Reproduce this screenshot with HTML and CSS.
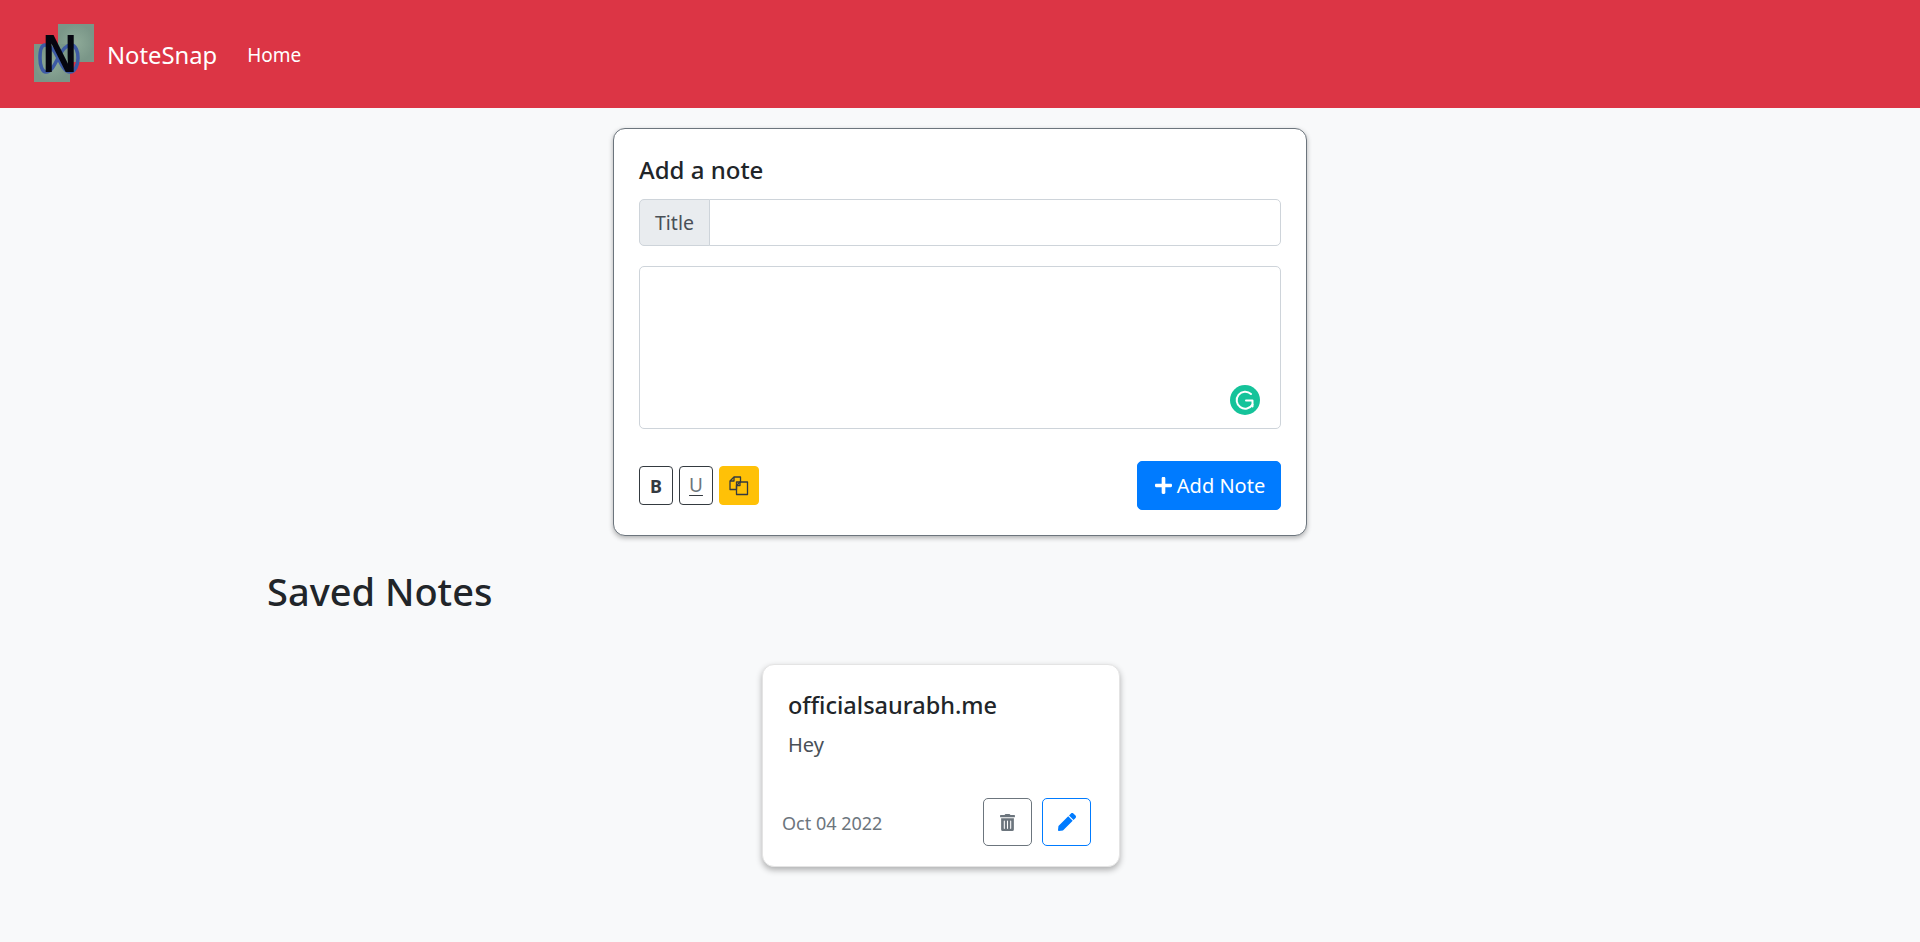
FILE: index.html
```html
<!DOCTYPE html>
<html lang="en">
<head>
<meta charset="utf-8">
<title>NoteSnap</title>
<link rel="stylesheet" href="styles.css">
</head>
<body>
<nav class="navbar">
  <a class="brand">
    <svg class="logo" width="60" height="60" viewBox="0 0 60 60">
      <defs>
        <radialGradient id="tile">
          <stop offset="0" stop-color="#8eaa98"/>
          <stop offset="1" stop-color="#7a9688"/>
        </radialGradient>
      </defs>
      <rect x="24" y="0" width="36" height="38" fill="url(#tile)"/>
      <rect x="0" y="20" width="36" height="38" fill="url(#tile)"/>
      <path d="M24 34C20 25 15 21 11 21C7 21 6 28 6 34C6 41 8 48 12 48C17 48 20 42 24 34C28 26 32 21 37 21C42 21 44 28 44 34C44 41 41 48 36 48C31 48 28 42 24 34Z" fill="none" stroke="#3d5aa5" stroke-width="3.500"/>
      <text class="logo-n" transform="translate(8.500 48) scale(.9 1)">N</text>
    </svg>
    <span>NoteSnap</span>
  </a>
  <a class="nav-link">Home</a>
</nav>

<section class="add-card">
  <h5 class="add-title">Add a note</h5>
  <div class="input-group">
    <span class="input-label">Title</span>
    <input class="input-field" type="text" aria-label="Title">
  </div>
  <div class="textarea-wrap">
    <textarea class="note-text" aria-label="Note"></textarea>
    <svg class="grammarly" width="30" height="30" viewBox="0 0 30 30">
      <circle cx="15" cy="15" r="15" fill="#15c39a"/>
      <path d="M21 9A8.500 8.500 0 1 0 22.500 19.500" fill="none" stroke="#fff" stroke-width="2" stroke-linecap="round"/>
      <path d="M16 15.500H22.500V21.500" fill="none" stroke="#fff" stroke-width="2" stroke-linecap="round" stroke-linejoin="round"/>
    </svg>
  </div>
  <div class="actions">
    <div class="tools">
      <button class="tool tool-b">B</button>
      <button class="tool tool-u">U</button>
      <button class="tool tool-copy">
        <svg width="20" height="20" viewBox="0 0 20 20" fill="none" stroke="#343a40" stroke-width="1.300" stroke-linejoin="round">
          <path d="M5 1H11.500V6H7.500V13.500H1V5Z"/>
          <path d="M5 1V5H1"/>
          <path d="M11 6H18.500V18.500H7.500V9.500Z"/>
          <path d="M11 6V9.500H7.500"/>
        </svg>
      </button>
    </div>
    <button class="add-btn">
      <svg width="17" height="17" viewBox="0 0 448 448" fill="#fff"><path d="M416 176H272V32c0-17.700-14.300-32-32-32h-32c-17.700 0-32 14.300-32 32v144H32c-17.700 0-32 14.300-32 32v32c0 17.700 14.300 32 32 32h144v144c0 17.700 14.300 32 32 32h32c17.700 0 32-14.300 32-32V272h144c17.700 0 32-14.300 32-32v-32c0-17.700-14.300-32-32-32z"/></svg>
      <span>Add Note</span>
    </button>
  </div>
</section>

<main class="container">
  <h2 class="saved-title">Saved Notes</h2>
  <div class="notes">
    <article class="note">
      <h5 class="note-title">officialsaurabh.me</h5>
      <p class="note-body">Hey</p>
      <div class="note-foot">
        <span class="note-date">Oct 04 2022</span>
        <div class="note-btns">
          <button class="icon-btn icon-btn-grey">
            <svg width="15" height="17" viewBox="0 0 448 512" fill="#6c757d"><path d="M32 464a48 48 0 0 0 48 48h288a48 48 0 0 0 48-48V128H32zm272-256a16 16 0 0 1 32 0v224a16 16 0 0 1-32 0zm-96 0a16 16 0 0 1 32 0v224a16 16 0 0 1-32 0zm-96 0a16 16 0 0 1 32 0v224a16 16 0 0 1-32 0zM432 32H312l-9.400-18.700A24 24 0 0 0 281.100 0H166.800a23.700 23.700 0 0 0-21.400 13.300L136 32H16A16 16 0 0 0 0 48v32a16 16 0 0 0 16 16h416a16 16 0 0 0 16-16V48a16 16 0 0 0-16-16z"/></svg>
          </button>
          <button class="icon-btn icon-btn-blue">
            <svg width="18" height="18" viewBox="0 0 512 512" fill="#007bff"><path d="M290.740 93.240l128.020 128.020-277.990 277.990-114.140 12.600C11.350 513.540-1.560 500.620.140 485.340l12.700-114.220 277.900-277.880zm207.200-19.060l-60.110-60.110c-18.750-18.750-49.160-18.750-67.910 0l-56.550 56.550 128.020 128.020 56.550-56.550c18.750-18.760 18.750-49.160 0-67.910z"/></svg>
          </button>
        </div>
      </div>
    </article>
  </div>
</main>
</body>
</html>
```

FILE: styles.css
```css
* { box-sizing: border-box; }
html { font-size: 20px; }
body {
  margin: 0;
  height: 942px;
  overflow: hidden;
  background: #f8f9fa;
  color: #212529;
  font-family: "Noto Sans", "Open Sans", "Liberation Sans", sans-serif;
  font-size: 20px;
  line-height: 30px;
}
.navbar {
  display: flex;
  align-items: center;
  height: 108px;
  padding: 0 34px;
  background: #dc3545;
  color: #fff;
}
.brand { display: flex; align-items: center; gap: 13px; font-size: 23.800px; margin-right: 30px; padding-top: 2px; }
.logo { display: block; margin-top: -2px; }
.logo-n { font: 700 53px "Liberation Sans", sans-serif; fill: #05050f; }
.nav-link { font-size: 19px; padding-top: 2px; }

.add-card {
  width: 694px;
  height: 408px;
  margin: 20px auto 0;
  padding: 23px 25px 25px;
  background: #fff;
  border: 1px solid #6c757d;
  border-radius: 12px;
  box-shadow: 0 2px 5px rgba(0,0,0,.3);
}
.add-title { margin: 0 0 11px; font-size: 24px; font-weight: 500; line-height: 36px; }
.input-group { display: flex; height: 47px; margin-bottom: 20px; }
.input-label {
  display: flex; align-items: center; padding: 0 15px;
  width: 71px;
  background: #e9ecef; color: #495057;
  border: 1px solid #ced4da; border-radius: 5px 0 0 5px;
  font-size: 19.500px;
}
.input-field {
  flex: 1; min-width: 0; margin-left: -1px;
  background: #fff;
  border: 1px solid #ced4da; border-radius: 0 5px 5px 0;
}
.textarea-wrap { position: relative; height: 163px; margin-bottom: 32px; }
.note-text {
  display: block; width: 100%; height: 100%;
  background: #fff;
  border: 1px solid #ced4da; border-radius: 5px;
  resize: none;
}
.grammarly { position: absolute; right: 21px; bottom: 14px; }
.actions { display: flex; justify-content: space-between; align-items: center; }
.tools { display: flex; gap: 6px; align-items: center; }
button { font-family: inherit; cursor: pointer; padding: 0; }
.tool {
  display: flex; align-items: center; justify-content: center;
  width: 34px; height: 39px;
  background: #fff; color: #343a40;
  border: 1px solid #343a40; border-radius: 4px;
  font-size: 18px; line-height: 1;
}
.tool-b { font-weight: 700; }
.tool-u { color: #6c757d; text-decoration: underline; text-decoration-color: #343a40; text-underline-offset: 3px; font-weight: 400; font-size: 19px; }
.tool-copy { width: 40px; background: #ffc107; border-color: #ffc107; }
.add-btn {
  display: flex; align-items: center; justify-content: center; gap: 5px;
  width: 144px; height: 49px;
  padding-left: 2px;
  background: #007bff; color: #fff;
  border: 1px solid #007bff; border-radius: 5px;
  font-size: 20px;
}
.container { width: 1386px; margin: 0 auto; }
.saved-title { margin: 31px 0 0; font-size: 38px; font-weight: 500; line-height: 48px; }
.notes { display: flex; padding-left: 495px; margin-top: 49px; }
.note {
  width: 358px; height: 203px;
  padding: 25px 25px 0 19px;
  background: #fff;
  border: 1px solid #e4e4e4;
  border-radius: 12px;
  box-shadow: 0 3px 6px rgba(0,0,0,.3);
}
.note-title { margin: 0 0 0 6px; font-size: 23.500px; font-weight: 500; line-height: 30px; }
.note-body { margin: 10px 0 0 6px; font-size: 20px; color: #495057; font-weight: 400; }
.note-foot { display: flex; align-items: center; justify-content: space-between; margin-top: 38px; padding-right: 3px; }
.note-date { font-size: 18px; color: #6c757d; font-weight: 400; padding-top: 2px; }
.note-btns { display: flex; gap: 10px; }
.icon-btn {
  display: flex; align-items: center; justify-content: center;
  width: 49px; height: 48px;
  background: #fff; border-radius: 5px;
}
.icon-btn-grey { border: 1px solid #6c757d; }
.icon-btn-blue { border: 1px solid #007bff; }
```
